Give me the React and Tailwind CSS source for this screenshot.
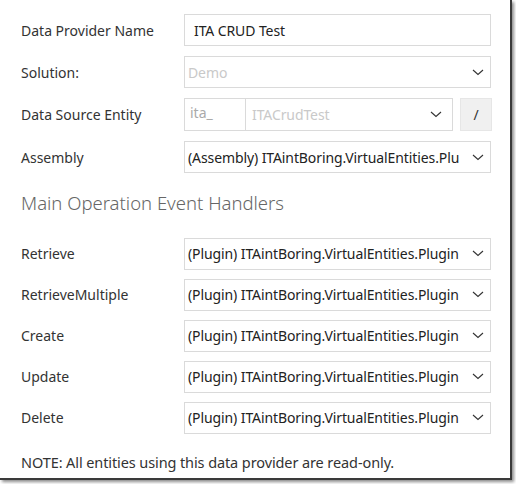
import React from 'react';

const Chevron = () => (
  <svg width="12" height="7" viewBox="0 0 12 7" className="flex-shrink-0">
    <path d="M1 1 L6 5.5 L11 1" fill="none" stroke="#333" strokeWidth="1.1" />
  </svg>
);

const Row = ({ label, children, className = '' }) => (
  <div className={`flex items-center ${className}`}>
    <div className="w-[163px] text-[14px] text-[#333]">{label}</div>
    {children}
  </div>
);

const Select = ({ value, muted }) => (
  <div className="w-[307px] h-[32px] border border-[#dadada] flex items-center pl-[3px] pr-[6px] gap-[6px]">
    <span className={`flex-1 overflow-hidden whitespace-nowrap text-[14px] tracking-[-0.1px] ${muted ? 'text-[#c9c9c9]' : 'text-[#222]'}`}>{value}</span>
    <Chevron />
  </div>
);

const handlers = ['Retrieve', 'RetrieveMultiple', 'Create', 'Update', 'Delete'];

const App = () => {
  return (
    <div className="w-[516px] h-[484px] bg-white" style={{ fontFamily: '"Segoe UI", "Noto Sans", sans-serif' }}>
      <div className="w-[512px] h-[480px] bg-white border-r-2 border-b-2 border-[#3a3a3a] shadow-[2px_2px_3px_rgba(0,0,0,0.45)] pl-[21px] pt-[14px]">
        <Row label="Data Provider Name">
          <div className="w-[307px] h-[32px] border border-[#dadada] flex items-center px-[9px] text-[14px] tracking-[-0.1px] text-[#222]">
            ITA CRUD Test
          </div>
        </Row>
        <Row label="Solution:" className="mt-[10px]">
          <Select value="Demo" muted />
        </Row>
        <Row label="Data Source Entity" className="mt-[10px]">
          <div className="flex items-center">
            <div className="w-[62px] h-[33px] border border-[#dadada] flex items-start pt-[3px] pl-[5px] text-[14px] text-[#aaa]">ita_</div>
            <div className="w-[207px] h-[33px] border border-l-0 border-[#dadada] flex items-center pl-[6px] pr-[10px]">
              <span className="flex-1 text-[14px] tracking-[-0.1px] text-[#c9c9c9]">ITACrudTest</span>
              <Chevron />
            </div>
            <div className="ml-[7px] w-[32px] h-[33px] bg-[#f0f0f0] border border-[#e6e6e6] flex items-center justify-center text-[14px] text-[#333]">/</div>
          </div>
        </Row>
        <Row label="Assembly" className="mt-[10px]">
          <Select value="(Assembly) ITAintBoring.VirtualEntities.Plu" />
        </Row>
        <div className="mt-[16px] text-[18.5px] font-light text-[#666]">Main Operation Event Handlers</div>
        <div className="mt-[21px] flex flex-col gap-[9px]">
          {handlers.map((h) => (
            <Row key={h} label={h}>
              <Select value="(Plugin) ITAintBoring.VirtualEntities.Plugin" />
            </Row>
          ))}
        </div>
        <div className="mt-[18px] text-[14.5px] tracking-[-0.1px] text-[#333]">NOTE: All entities using this data provider are read-only.</div>
      </div>
    </div>
  );
};

export default App;
